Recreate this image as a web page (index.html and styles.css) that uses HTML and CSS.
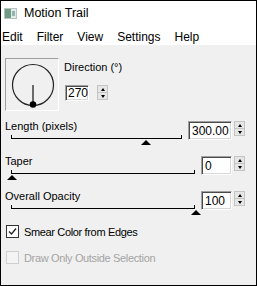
FILE: index.html
```html
<!DOCTYPE html>
<html lang="en">
<head>
    <meta charset="UTF-8">
    <title>Motion Trail</title>
    <link rel="stylesheet" href="styles.css">
</head>
<body>

<div class="window">
    <div class="titlebar">
        <svg class="app-icon" width="13" height="11" viewBox="0 0 13 11">
            <rect x="0" y="0" width="13" height="11" fill="#b8c4c0"/>
            <rect x="1" y="1" width="6" height="9" fill="#6f9a86"/>
            <rect x="7" y="1" width="5" height="9" fill="#e4ecea"/>
            <rect x="8" y="3" width="3" height="5" fill="#8fb7b0"/>
        </svg>
        <span>Motion Trail</span>
    </div>

    <div class="menubar">
        <span>Edit</span>
        <span>Filter</span>
        <span>View</span>
        <span>Settings</span>
        <span>Help</span>
    </div>

    <div class="content">
        <div class="top">
            <div class="dial">
                <svg width="52" height="51" viewBox="0 0 52 51">
                    <circle cx="27" cy="26" r="20.5" fill="none" stroke="#222" stroke-width="1.2"/>
                    <line x1="27" y1="26" x2="27" y2="45" stroke="#6a6a6a" stroke-width="2"/>
                    <circle cx="27" cy="45.5" r="3.3" fill="#000"/>
                </svg>
            </div>
            <div class="direction">
                <div class="label">Direction (°)</div>
                <div class="field-row">
                    <div class="field dir-field">270</div>
                    <div class="spin spin-wide">
                        <div class="spin-btn"><i class="up"></i></div>
                        <div class="spin-btn"><i class="down"></i></div>
                    </div>
                </div>
            </div>
        </div>

        <div class="slider-row">
            <div class="slider">
                <div class="label">Length (pixels)</div>
                <div class="track"><i class="thumb" style="left: 134px"></i></div>
            </div>
            <div class="field wide">300.00</div>
            <div class="spin">
                <div class="spin-btn"><i class="up"></i></div>
                <div class="spin-btn"><i class="down"></i></div>
            </div>
        </div>

        <div class="slider-row">
            <div class="slider">
                <div class="label">Taper</div>
                <div class="track"><i class="thumb" style="left: 0px"></i></div>
            </div>
            <div class="field">0</div>
            <div class="spin">
                <div class="spin-btn"><i class="up"></i></div>
                <div class="spin-btn"><i class="down"></i></div>
            </div>
        </div>

        <div class="slider-row">
            <div class="slider">
                <div class="label">Overall Opacity</div>
                <div class="track"><i class="thumb" style="left: 184px"></i></div>
            </div>
            <div class="field">100</div>
            <div class="spin">
                <div class="spin-btn"><i class="up"></i></div>
                <div class="spin-btn"><i class="down"></i></div>
            </div>
        </div>

        <div class="check">
            <span class="box checked">
                <svg width="11" height="11" viewBox="0 0 11 11">
                    <polyline points="2,5.5 4.5,8 9,2.5" fill="none" stroke="#222" stroke-width="1.3"/>
                </svg>
            </span>
            <span>Smear Color from Edges</span>
        </div>

        <div class="check disabled">
            <span class="box"></span>
            <span>Draw Only Outside Selection</span>
        </div>
    </div>
</div>

</body>
</html>
```

FILE: styles.css
```css
body {
    margin: 0;
    font-family: "Liberation Sans", Arial, sans-serif;
    font-size: 11px;
    color: #000;
}

.window {
    width: 257px;
    height: 286px;
    box-sizing: border-box;
    border: 1px solid #000;
    background-color: #f0f0f0;
    display: flex;
    flex-direction: column;
}

.titlebar {
    height: 24px;
    background-color: #fff;
    display: flex;
    align-items: center;
    padding-left: 3px;
    font-size: 12.5px;
}

.app-icon {
    margin-right: 7px;
}

.menubar {
    height: 20px;
    box-sizing: border-box;
    background-color: #fff;
    display: flex;
    align-items: center;
    padding-left: 1px;
    padding-top: 3px;
    font-size: 12px;
}

.menubar span {
    margin-right: 14px;
}

.content {
    padding: 0 11px 0 4px;
}

.top {
    display: flex;
    margin-top: 13px;
    height: 62px;
}

.dial {
    width: 52px;
    height: 51px;
    border: 1px solid;
    border-color: #a0a0a0 #fff #fff #a0a0a0;
}

.dial svg {
    display: block;
}

.direction {
    margin-left: 5px;
    padding-top: 3px;
}

.label {
    height: 13px;
    line-height: 13px;
}

.field-row {
    display: flex;
    align-items: flex-start;
    margin-top: 11px;
    margin-left: 1px;
}

.field {
    width: 31px;
    height: 19px;
    box-sizing: border-box;
    background-color: #fff;
    border: 1px solid;
    border-color: #a0a0a0 #fff #fff #a0a0a0;
    box-shadow: inset 1px 1px 0 #4a4a4a, inset -1px -1px 0 #d8d8d8;
    padding: 2px 0 0 3px;
    line-height: 14px;
    font-size: 12px;
}

.field.wide {
    width: 44px;
}

.dir-field {
    width: 24px;
    height: 16px;
    padding: 0 0 0 2px;
}

.spin {
    width: 11px;
    margin-left: 2px;
    margin-top: 1px;
    display: flex;
    flex-direction: column;
}

.spin-wide {
    margin-left: 8px;
    margin-top: 0;
}

.spin-btn {
    background-color: #e6e6e6;
    border: 1px solid #c4c4c4;
    box-sizing: border-box;
    height: 8px;
    display: flex;
    align-items: center;
    justify-content: center;
}

.spin-btn + .spin-btn {
    border-top: none;
    height: 7px;
}

.spin-btn i {
    width: 0;
    height: 0;
    border-left: 2.5px solid transparent;
    border-right: 2.5px solid transparent;
}

.spin-btn .up {
    border-bottom: 3px solid #000;
}

.spin-btn .down {
    border-top: 3px solid #000;
}

.slider-row {
    display: flex;
    align-items: flex-start;
    height: 35px;
}

.slider {
    flex: 1;
}

.track {
    position: relative;
    height: 3px;
    margin: 2px 6px 0 6px;
    border: 1px solid #000;
    border-top: none;
}

.thumb {
    position: absolute;
    top: 5px;
    margin-left: -5px;
    width: 0;
    height: 0;
    border-left: 5px solid transparent;
    border-right: 5px solid transparent;
    border-bottom: 5px solid #000;
}

.slider-row .field {
    margin-top: 1px;
}

.check {
    display: flex;
    align-items: center;
    height: 13px;
    margin-bottom: 13px;
    letter-spacing: -0.35px;
}

.box {
    width: 13px;
    height: 13px;
    box-sizing: border-box;
    border: 1px solid #333;
    background-color: #fff;
    margin: 0 5px 0 1px;
    display: flex;
    align-items: center;
    justify-content: center;
}

.disabled {
    color: #a4a4a4;
}

.disabled .box {
    border-color: #cfcfcf;
    background-color: #f4f4f4;
}
```
